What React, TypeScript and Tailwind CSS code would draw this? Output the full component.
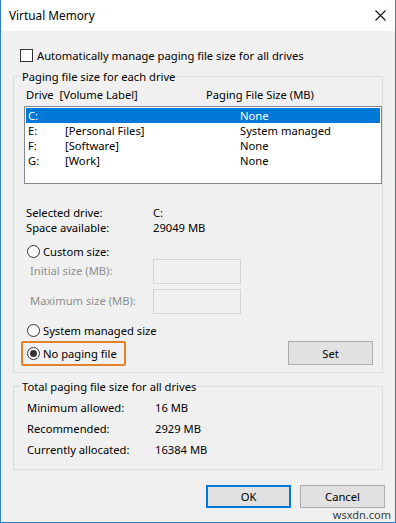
import React from "react";

const font = { fontFamily: '"Noto Sans", "Open Sans", Arial, sans-serif' };

function Radio({ checked = false }: { checked?: boolean }) {
  return (
    <span className="w-[13px] h-[13px] rounded-full border border-[#333] bg-white flex items-center justify-center shrink-0">
      {checked && <span className="w-[7px] h-[7px] rounded-full bg-[#333]" />}
    </span>
  );
}

function GroupBox({ label, className = "", children }: { label: string; className?: string; children: React.ReactNode }) {
  return (
    <div className={"border border-[#dcdcdc] flex flex-col " + className}>
      <span className="-mt-[8px] ml-[7px] px-[1px] w-fit bg-[#f0f0f0] leading-[15px]">{label}</span>
      {children}
    </div>
  );
}

const drives = [
  { letter: "C:", label: "", size: "None", selected: true },
  { letter: "E:", label: "[Personal Files]", size: "System managed" },
  { letter: "F:", label: "[Software]", size: "None" },
  { letter: "G:", label: "[Work]", size: "None" },
];

export default function App() {
  return (
    <div
      className="relative w-[396px] h-[523px] bg-[#f0f0f0] border-x border-b border-[#2f80c4] flex flex-col text-[11.2px] text-black"
      style={font}
    >
      {/* title bar */}
      <div className="h-[31px] shrink-0 bg-white flex items-center justify-between pl-[8px] pr-[9px]">
        <span className="text-[11.8px]">Virtual Memory</span>
        <svg width="11" height="11" viewBox="0 0 11 11" className="text-[#111]">
          <path d="M0.5 0.5 L10.5 10.5 M10.5 0.5 L0.5 10.5" stroke="currentColor" strokeWidth="1.1" fill="none" />
        </svg>
      </div>

      <div className="flex-1 flex flex-col px-[12px]">
        {/* auto manage */}
        <div className="mt-[18px] h-[13px] flex items-center ml-[7px] gap-[4px]">
          <span className="w-[13px] h-[13px] border border-[#333] bg-white shrink-0" />
          <span className="leading-[15px]">Automatically manage paging file size for all drives</span>
        </div>

        {/* per-drive group */}
        <GroupBox label="Paging file size for each drive" className="mt-[14px] pb-[6px]">
          <div className="mt-[3px] pl-[12px] flex leading-[15px]">
            <span className="w-[180px]">Drive&nbsp; [Volume Label]</span>
            <span>Paging File Size (MB)</span>
          </div>

          <div className="mt-[4px] ml-[10px] h-[78px] border border-[#828790] bg-white p-[1px] flex flex-col">
            {drives.map((d) => (
              <div
                key={d.letter}
                className={
                  "h-[15px] shrink-0 flex items-center pl-[2px] leading-[15px] " +
                  (d.selected ? "bg-[#0078d7] text-white" : "")
                }
              >
                <span className="w-[37px]">{d.letter}</span>
                <span className="w-[175px]">{d.label}</span>
                <span>{d.size}</span>
              </div>
            ))}
          </div>

          <div className="mt-[21px] pl-[12px] flex flex-col leading-[15px]">
            <div className="flex">
              <span className="w-[127px]">Selected drive:</span>
              <span>C:</span>
            </div>
            <div className="flex">
              <span className="w-[127px]">Space available:</span>
              <span>29049 MB</span>
            </div>
          </div>

          <div className="mt-[10px] ml-[13px] h-[13px] flex items-center gap-[3px]">
            <Radio />
            <span className="leading-[15px]">Custom size:</span>
          </div>

          <div className="mt-[1px] pl-[16px] h-[25px] flex items-center text-[#8e8e8e]">
            <span className="w-[123px]">Initial size (MB):</span>
            <span className="w-[88px] h-[25px] border border-[#d4d4d4] bg-[#f0f0f0]" />
          </div>
          <div className="mt-[5px] pl-[16px] h-[25px] flex items-center text-[#8e8e8e]">
            <span className="w-[123px]">Maximum size (MB):</span>
            <span className="w-[88px] h-[25px] border border-[#d4d4d4] bg-[#f0f0f0]" />
          </div>

          <div className="mt-[10px] ml-[13px] h-[13px] flex items-center gap-[3px]">
            <Radio />
            <span className="leading-[15px]">System managed size</span>
          </div>

          <div className="mt-[3px] h-[26px] flex items-center justify-between pr-[9px]">
            <div className="ml-[7px] h-[25px] border-[2.5px] border-[#e3812b] rounded-[2px] flex items-center gap-[3px] pl-[4px] pr-[7px]">
              <Radio checked />
              <span className="leading-[15px]">No paging file</span>
            </div>
            <button className="w-[85px] h-[24px] border border-[#adadad] bg-[#e1e1e1] leading-[15px]">Set</button>
          </div>
        </GroupBox>

        {/* totals group */}
        <GroupBox label="Total paging file size for all drives" className="mt-[13px] pb-[8px]">
          <div className="mt-[4px] pl-[13px] flex flex-col">
            {[
              ["Minimum allowed:", "16 MB"],
              ["Recommended:", "2929 MB"],
              ["Currently allocated:", "16384 MB"],
            ].map(([k, v]) => (
              <div key={k} className="h-[21px] flex items-center">
                <span className="w-[128px]">{k}</span>
                <span>{v}</span>
              </div>
            ))}
          </div>
        </GroupBox>

        {/* dialog buttons */}
        <div className="mt-[15px] -mr-[2px] flex justify-end gap-[9px]">
          <button className="w-[85px] h-[23px] border-2 border-[#0078d7] bg-[#e1e1e1] leading-[15px]">OK</button>
          <button className="w-[85px] h-[23px] border border-[#adadad] bg-[#e1e1e1] leading-[15px]">Cancel</button>
        </div>
      </div>

      <span className="absolute right-[4px] bottom-[1px] text-[11px] leading-[12px] text-[#3a3a3a]">wsxdn.com</span>
    </div>
  );
}
